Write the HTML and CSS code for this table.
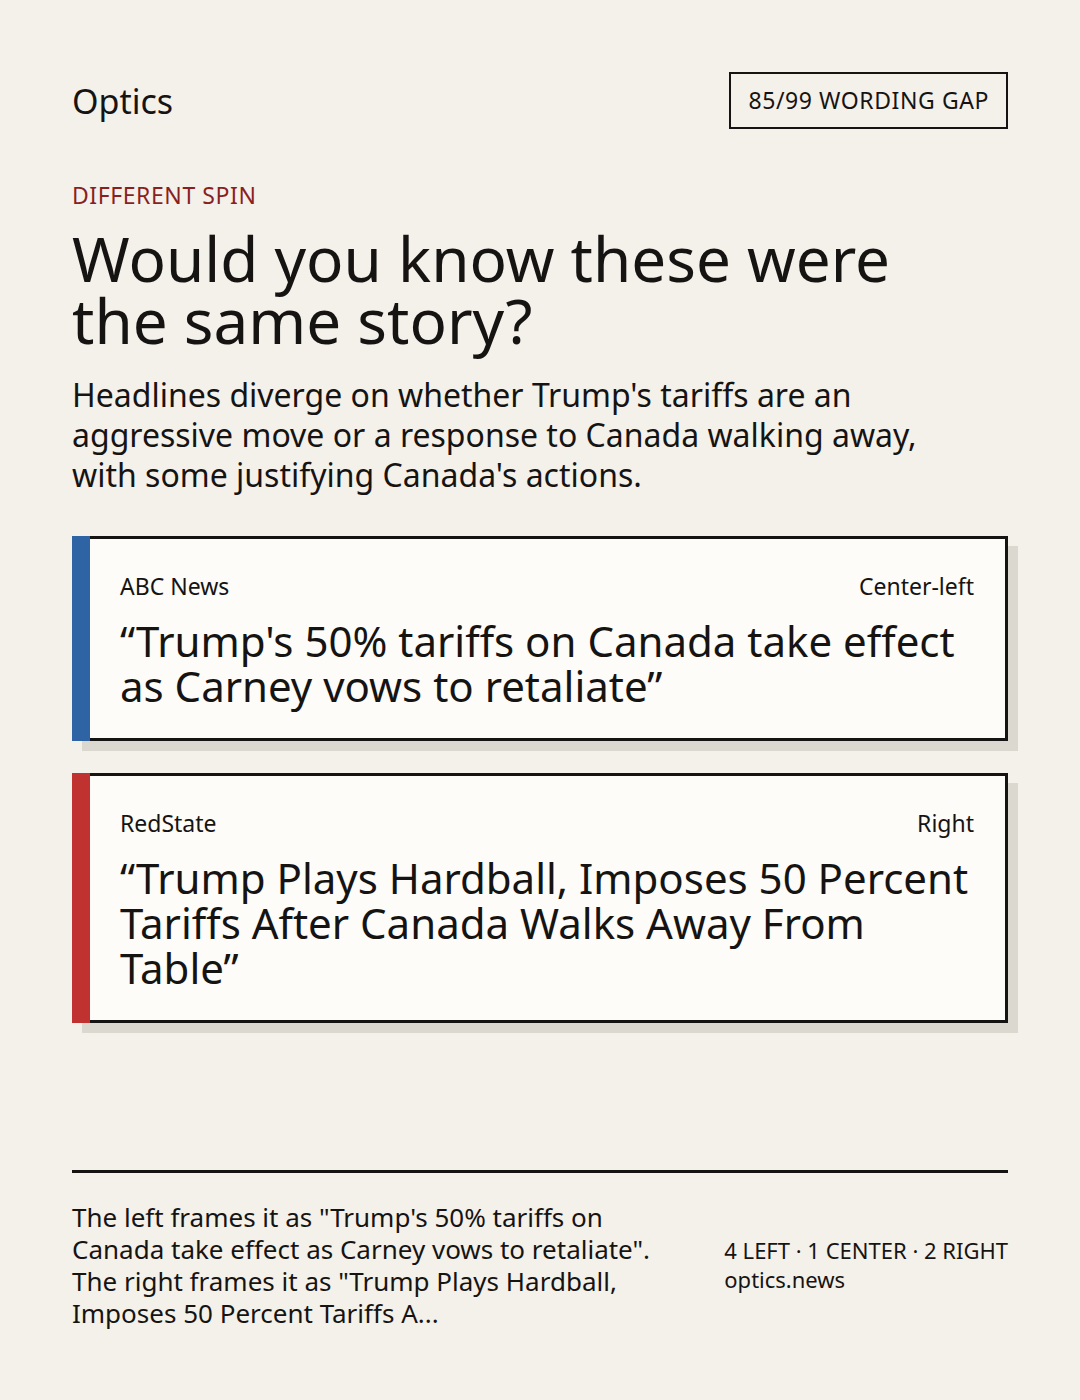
FILE: index.html
```html
<!DOCTYPE html>
<html lang="en">
<head>
<meta charset="utf-8">
<title>Optics</title>
<link rel="stylesheet" href="styles.css">
</head>
<body>
<main class="page">
  <header class="top">
    <div class="brand">Optics</div>
    <div class="badge">85/99 WORDING GAP</div>
  </header>
  <div class="kicker">DIFFERENT SPIN</div>
  <h1 class="title">Would you know these were the same story?</h1>
  <p class="dek">Headlines diverge on whether Trump's tariffs are an aggressive move or a response to Canada walking away, with some justifying Canada's actions.</p>

  <section class="cards">
    <article class="card">
      <div class="bar bar-left"></div>
      <div class="card-body">
        <div class="meta"><span>ABC News</span><span>Center-left</span></div>
        <div class="quote">“Trump's 50% tariffs on Canada take effect as Carney vows to retaliate”</div>
      </div>
    </article>
    <article class="card">
      <div class="bar bar-right"></div>
      <div class="card-body">
        <div class="meta"><span>RedState</span><span>Right</span></div>
        <div class="quote">“Trump Plays Hardball, Imposes 50 Percent Tariffs After Canada Walks Away From Table”</div>
      </div>
    </article>
  </section>

  <footer class="foot">
    <p class="summary">The left frames it as "Trump's 50% tariffs on Canada take effect as Carney vows to retaliate". The right frames it as "Trump Plays Hardball, Imposes 50 Percent Tariffs A...</p>
    <div class="stats">
      <div>4 LEFT · 1 CENTER · 2 RIGHT</div>
      <div>optics.news</div>
    </div>
  </footer>
</main>
</body>
</html>
```
FILE: styles.css
```css
* { box-sizing: border-box; }
html, body { margin: 0; padding: 0; }
body {
  background: #f4f0ea;
  color: #161412;
  font-family: "Noto Sans", "Open Sans", "DejaVu Sans", sans-serif;
}
.page {
  min-height: 1400px;
  padding: 72px 72px 71px;
  display: flex;
  flex-direction: column;
}
.top {
  display: flex;
  justify-content: space-between;
  align-items: center;
  height: 57px;
}
.brand {
  font-size: 34px;
  line-height: 1.2;
  padding-top: 2px;
}
.badge {
  border: 2px solid #161412;
  font-size: 23px;
  line-height: 30px;
  padding: 11px 17px 12px;
  letter-spacing: 0.025em;
}
.kicker {
  margin-top: 51px;
  color: #8a1f1f;
  font-size: 23px;
  line-height: 31px;
  letter-spacing: 0.025em;
}
.title {
  margin: 16px 0 0;
  font-weight: 400;
  font-size: 62px;
  line-height: 62px;
  max-width: 880px;
}
.dek {
  margin: 24px 0 0;
  font-size: 32px;
  line-height: 40px;
  max-width: 900px;
}
.cards {
  margin-top: 41px;
  display: flex;
  flex-direction: column;
  gap: 32px;
}
.card {
  display: flex;
  box-shadow: 10px 10px 0 #dbd8d0;
  background: #fdfcf8;
}
.bar { width: 18px; flex: none; }
.bar-left { background: #2e63a4; }
.bar-right { background: #bf3230; }
.card-body {
  flex: 1;
  border: 3px solid #161412;
  border-left: none;
  padding: 32px 31px 30px 30px;
}
.meta {
  display: flex;
  justify-content: space-between;
  font-size: 23px;
  line-height: 30px;
}
.quote {
  margin-top: 17px;
  font-size: 42px;
  line-height: 45px;
}
.foot {
  margin-top: auto;
  border-top: 3px solid #161412;
  padding-top: 28px;
  display: flex;
  justify-content: space-between;
  align-items: center;
}
.summary {
  margin: 0;
  width: 620px;
  font-size: 26px;
  line-height: 32px;
}
.stats {
  font-size: 22px;
  line-height: 29px;
}
```
